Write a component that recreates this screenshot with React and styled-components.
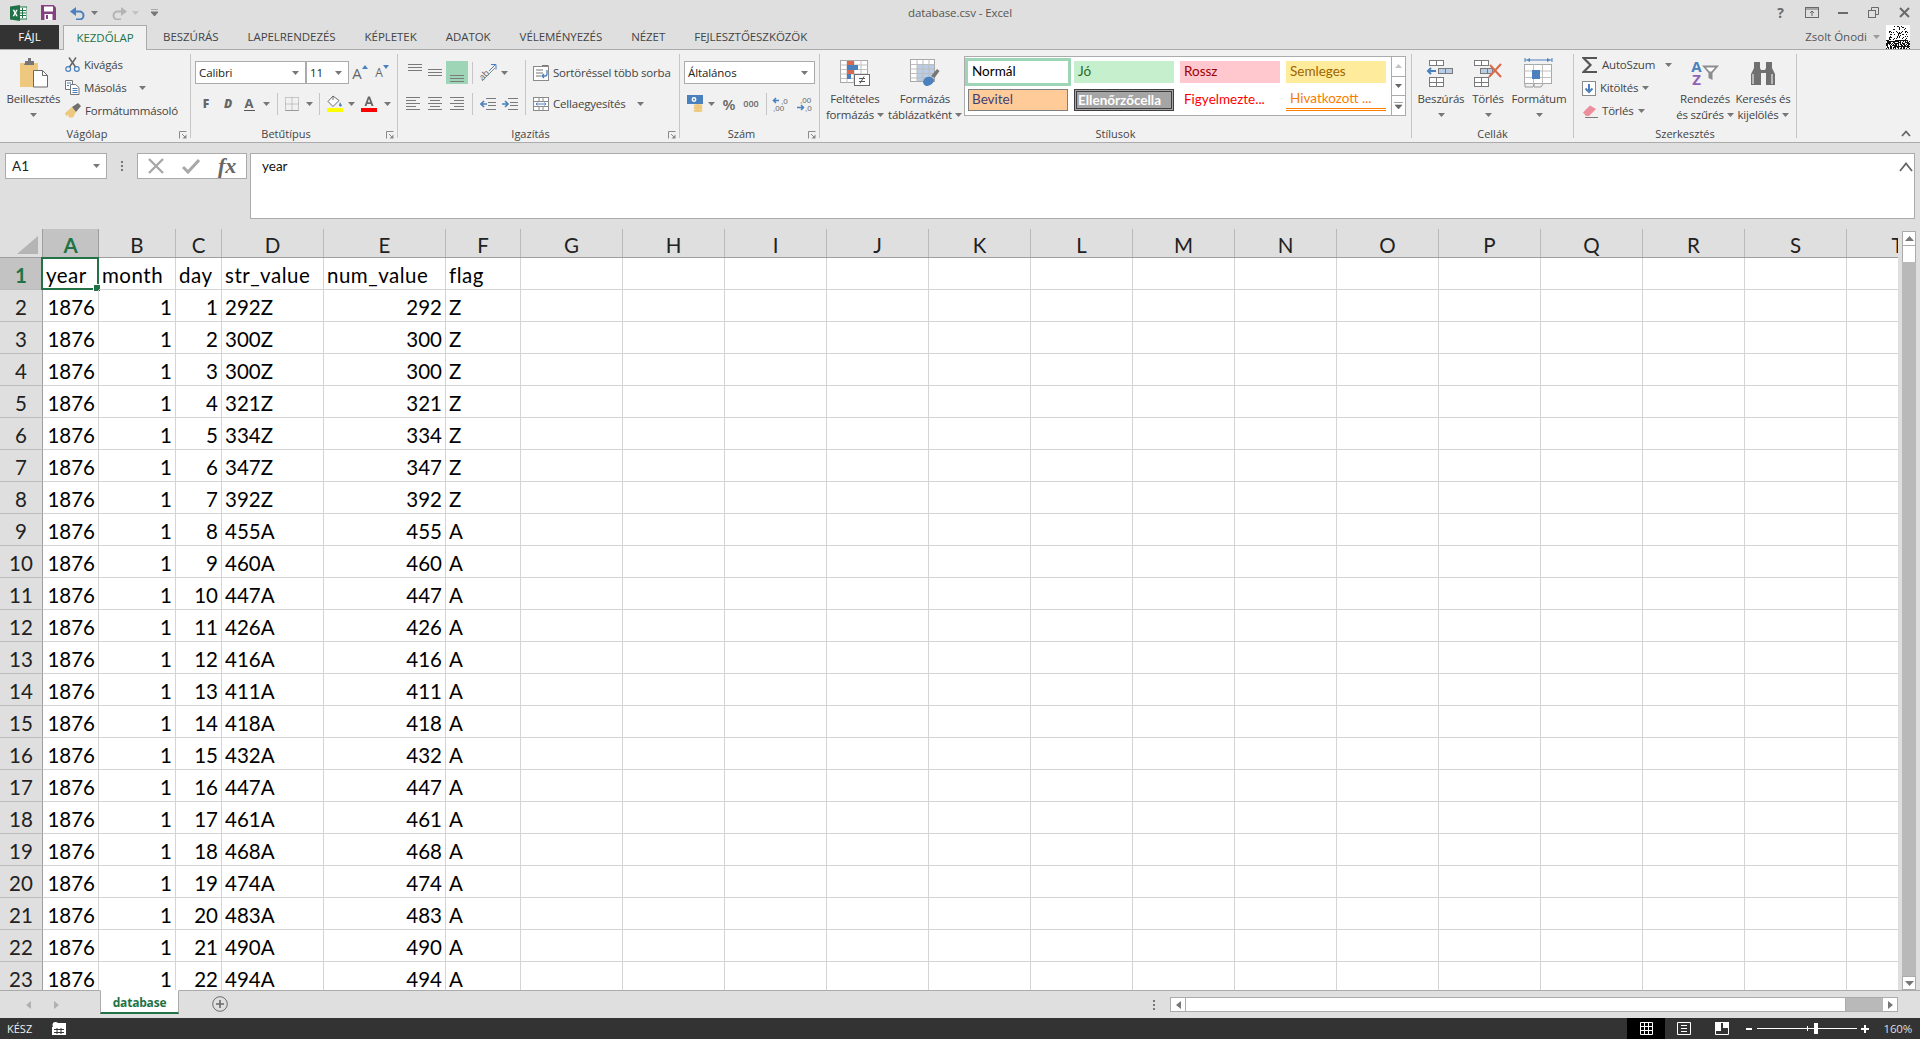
import React from 'react';
import styled, { createGlobalStyle } from 'styled-components';

const UI = '"Open Sans", "Noto Sans", sans-serif';
const CAL = 'Lato, "Liberation Sans", sans-serif';

const Global = createGlobalStyle`
  html, body { margin: 0; padding: 0; background: #dfdfdf; }
  * { box-sizing: border-box; }
`;

const Page = styled.div`
  width: 1920px; height: 1039px; display: flex; flex-direction: column; overflow: hidden;
  background: #dfdfdf; font-family: ${UI}; font-size: 11.5px; color: #444;
`;
const Glyph = styled.svg`display: block; flex: none;`;
const Ico = ({ w = 16, h = 16, children }) => <Glyph width={w} height={h} viewBox={`0 0 ${w} ${h}`}>{children}</Glyph>;

/* ---------- title bar ---------- */
const TitleBar = styled.div`
  height: 25px; display: grid; grid-template-columns: 1fr auto 1fr; align-items: center;
`;
const Qat = styled.div`display: flex; align-items: center; padding-left: 10px;`;
const QatItem = styled.div`
  width: ${p => p.$w}px; margin-left: ${p => p.$ml || 0}px; display: flex; align-items: center; justify-content: center;
`;
const WinTitle = styled.div`font-size: 11.5px; color: #555; letter-spacing: -0.1px; padding-bottom: 1px;`;
const WinButtons = styled.div`display: flex; justify-content: flex-end; align-items: center; padding-right: 0;`;
const WinBtn = styled.div`width: ${p => p.$w || 31}px; display: flex; justify-content: center; color: #6a6a6a; font-weight: 700; font-size: 14px;`;

/* ---------- tabs ---------- */
const TabRow = styled.div`
  height: 25px; display: flex; align-items: stretch; border-bottom: 1px solid #ababab;
`;
const FileTab = styled.div`
  width: 59px; margin-right: 4px; background: #333; color: #fff; display: flex; align-items: center; justify-content: center; font-size: 11.5px; padding-bottom: 1px;
`;
const Tab = styled.div`
  padding: 0 ${p => (p.$active ? 12.5 : 14.5)}px 2px; display: flex; align-items: center; font-size: 11.5px; color: ${p => (p.$active ? '#217346' : '#444')};
  letter-spacing: -0.05px;
  margin-right: ${p => (p.$active ? 1.5 : 0)}px;
  ${p => p.$active && `
    background:#f1f1f1; border:1px solid #ababab; border-bottom:0; height:25px;
  `}
`;
const UserBox = styled.div`margin-left: auto; display: flex; align-items: center; padding: 0 10px 1px 0; gap: 6px; font-size: 11.5px; color: #555;`;

/* ---------- ribbon ---------- */
const Ribbon = styled.div`
  height: 93px; padding: 4px 0; display: flex; background: #f1f1f1; border-bottom: 1px solid #ababab;
`;
const Group = styled.div`
  width: ${p => p.$w}px; height: 84px; flex: none; display: flex; flex-direction: column; position: relative;
  border-right: 1px solid #c6c6c6;
`;
const GroupBody = styled.div`height: 73px; display: flex; padding-left: ${p => p.$pl || 0}px;`;
const GroupLabel = styled.div`
  height: 14px; line-height: 14px; margin-bottom: -3px; text-align: center; font-size: 11px; color: #444;
  padding-right: ${p => (p.$launch ? 16 : 0)}px;
`;
const Launcher = styled.div`position: absolute; right: 3px; bottom: -1px;`;
const Big = styled.div`
  width: ${p => p.$w}px; margin-left: ${p => p.$ml || 0}px; flex: none; display: flex; flex-direction: column; align-items: center; padding-top: 4px;
`;
const BigIcon = styled.div`height: 30px; display: flex; align-items: center; justify-content: center;`;
const BigLine = styled.div`
  height: 16px; line-height: 16px; margin-top: ${p => p.$mt || 0}px; white-space: nowrap; font-size: 11.5px; letter-spacing: -0.2px; display: flex; align-items: center; gap: 3px;
`;
const SmallCol = styled.div`width: ${p => p.$w}px; margin-left: ${p => p.$ml || 0}px; margin-top: ${p => p.$mt || 0}px; flex: none;`;
const SmallRow = styled.div`height: 23px; display: flex; align-items: center; gap: 4px; white-space: nowrap; font-size: 11.5px; letter-spacing: -0.2px;`;
const Caret = ({ c = '#777' }) => <Ico w={7} h={4}><path d="M0 0h7L3.5 4z" fill={c} /></Ico>;
const CaretSlot = styled.div`width: ${p => p.$w}px; margin-left: ${p => p.$ml || 0}px; flex: none; display: flex; justify-content: center;`;
const Stack = styled.div`display: flex; flex-direction: column; flex: none; padding-top: 7px; gap: 8px; width: ${p => (p.$w ? `${p.$w}px` : 'auto')};`;
const ToolRow = styled.div`height: ${p => p.$h || 23}px; display: flex; align-items: center; padding-left: ${p => p.$pl || 0}px;`;
const Tool = styled.div`
  width: ${p => p.$w}px; height: 23px; margin-left: ${p => p.$ml || 0}px; flex: none; display: flex; align-items: center; justify-content: center;
  background: ${p => (p.$on ? '#9fd5b7' : 'transparent')}; color: #555;
`;
const Sep = styled.div`width: 1px; height: 22px; margin-left: ${p => p.$ml || 0}px; background: #c6c6c6; flex: none;`;
const TallSep = styled.div`width: 1px; height: 55px; margin-top: 6px; background: #c6c6c6; flex: none;`;
const Select = styled.div`
  width: ${p => p.$w}px; height: 23px; flex: none; margin-left: ${p => p.$ml || 0}px; background: #fff; border: 1px solid #ababab; display: flex; align-items: center; justify-content: space-between;
  padding: 0 6px 0 3px; font-size: 11.5px; color: #222; letter-spacing: -0.1px;
`;
const BoldLetter = styled.span`font-size: 12px; font-weight: 800; font-style: ${p => (p.$it ? 'italic' : 'normal')}; color: #666;`;
const LetterWrap = styled.span`position: relative; display: flex; flex-direction: column; align-items: center; line-height: 13px; font-weight: 700; font-size: 13px; color: #666;`;
const GrowLetter = styled.span`font-size: ${p => (p.$small ? 12 : 15)}px; font-weight: 500; line-height: 16px; color: #666;`;
const Bar = styled.span`width: ${p => p.$w || 11}px; height: ${p => p.$h || 1}px; background: ${p => p.$c || '#555'}; display: block;`;
const Sym = styled.span`font-size: ${p => p.$s || 12}px; font-weight: 600; color: #666;`;

/* gallery */
const Gallery = styled.div`
  width: 442px; height: 60px; margin: 2px 0 0 4px; background: #fff; border: 1px solid #ababab; display: flex; flex: none;
`;
const Styles = styled.div`
  width: 426px; padding: 4px 0 0 3px; display: grid; grid-template-columns: repeat(4, 100px); grid-auto-rows: 22px; column-gap: 6px; row-gap: 6px;
`;
const StyleCell = styled.div`
  height: 22px; display: flex; align-items: center; padding: 0 0 2px 4px; white-space: nowrap; font-family: ${CAL}; font-size: 13.5px;
  background: ${p => p.$bg || 'transparent'}; color: ${p => p.$c || '#000'}; font-weight: ${p => (p.$b ? 700 : 400)};
  ${p => p.$sel && 'box-shadow: 0 0 0 3px #9fd5b7;'}
  ${p => p.$bd && `border: 1px solid ${p.$bd}; padding-left: 3px;`}
  ${p => p.$dbl && 'border: 3px double #3f3f3f; padding: 0 0 0 1px;'}
  ${p => p.$under && 'border-bottom: 3px double #ff8001;'}
`;
const GalleryScroll = styled.div`
  flex: 1; border-left: 1px solid #ababab; display: flex; flex-direction: column;
`;
const GalleryBtn = styled.div`
  flex: 1; display: flex; align-items: center; justify-content: center; & + & { border-top: 1px solid #ababab; }
`;
const Collapse = styled.div`margin-left: auto; align-self: flex-end; margin-right: 9px; margin-bottom: 1px;`;

/* ---------- formula bar ---------- */
const FormulaBar = styled.div`height: 86px; padding: 10px 5px 0; display: flex; align-items: flex-start; flex: none;`;
const NameBox = styled.div`
  width: 102px; height: 26px; background: #fff; border: 1px solid #ababab; display: flex; align-items: center; justify-content: space-between; padding: 0 6px; font-family: ${CAL}; font-size: 13.5px; color: #222;
`;
const Dots = styled.div`width: 30px; height: 26px; display: flex; align-items: center; justify-content: center;`;
const FxBox = styled.div`
  width: 110px; height: 26px; background: #fff; border: 1px solid #ababab; display: flex; align-items: center; gap: 18px; padding: 0 4px 0 10px;
`;
const Fx = styled.span`font-family: "Liberation Serif", serif; font-style: italic; font-weight: 700; font-size: 22px; line-height: 24px; color: #666;`;
const FormulaInput = styled.div`
  position: relative; flex: 1; margin-left: 3px; height: 66px; background: #fff; border: 1px solid #ababab; padding: 3px 11px; font-family: ${CAL}; font-size: 13.5px; line-height: 18px; color: #111;
`;
const ExpandIcon = styled.div`position: absolute; right: 1px; top: 8px;`;

/* ---------- sheet ---------- */
const SheetArea = styled.div`height: 761px; display: flex; flex: none;`;
const Sheet = styled.div`width: 1898px; height: 761px; overflow: hidden; background: #fff; flex: none;`;
const TEMPLATE = `43px 56px 77px 46px 102px 122px 75px repeat(14, 102px)`;
const HeadRow = styled.div`
  display: grid; grid-template-columns: ${TEMPLATE}; height: 29px; background: #dfdfdf; border-bottom: 1px solid #9e9e9e; width: 2100px;
`;
const Corner = styled.div`border-right: 1px solid #9e9e9e; display: flex; align-items: flex-end; justify-content: flex-end; padding: 0 4px 3px 0;`;
const ColHead = styled.div`
  border-right: 1px solid #b9b9b9; display: flex; align-items: center; justify-content: center; padding-top: 3px; font-family: ${CAL}; font-size: 20.5px; color: #222;
  ${p => p.$on && 'background:#c3c3c3; color:#217346; font-weight:700; border-right-color:#9e9e9e;'}
`;
const Row = styled.div`display: grid; grid-template-columns: ${TEMPLATE}; height: 32px; width: 2100px;`;
const RowHead = styled.div`
  background: ${p => (p.$on ? '#c3c3c3' : '#dfdfdf')}; border-right: 1px solid #9e9e9e; border-bottom: 1px solid #bdbdbd; display: flex; align-items: center; justify-content: center; padding-top: 2px;
  font-family: ${CAL}; font-size: 20.5px; color: ${p => (p.$on ? '#217346' : '#222')}; font-weight: ${p => (p.$on ? 700 : 400)};
`;
const Cell = styled.div`
  position: relative; border-right: 1px solid #d4d4d4; border-bottom: 1px solid #d4d4d4; display: flex; align-items: center; white-space: nowrap;
  justify-content: ${p => (p.$num ? 'flex-end' : 'flex-start')}; padding: ${p => (p.$num ? '2px 3px 0 0' : '2px 0 0 3px')};
  font-family: ${CAL}; font-size: 20.5px; color: #000; letter-spacing: ${p => (p.$head ? 0.5 : 0)}px;
`;
const Selection = styled.div`position: absolute; left: -2px; top: -1px; right: -1px; bottom: -1px; border: 2px solid #217346; pointer-events: none;`;
const Handle = styled.div`position: absolute; right: -3px; bottom: -3px; width: 6px; height: 6px; background: #217346; border: 1px solid #fff; box-sizing: content-box; margin: -1px;`;
const VScroll = styled.div`
  width: 22px; padding: 2px 4px 0; display: flex; flex-direction: column;
`;
const ScrollBtn = styled.div`
  height: ${p => p.$h || 15}px; background: #fff; border: 1px solid #ababab; display: flex; align-items: center; justify-content: center; flex: none;
`;
const VThumb = styled.div`height: 16px; background: #fff; border-left: 1px solid #ababab; border-right: 1px solid #ababab; flex: none;`;
const VTrack = styled.div`flex: 1; background: #b9b9b9;`;

/* ---------- sheet bar ---------- */
const SheetBar = styled.div`height: 28px; flex: none; display: flex; align-items: flex-start; border-top: 1px solid #ababab;`;
const NavArrows = styled.div`width: 100px; height: 27px; display: flex; align-items: center; padding-left: 26px; gap: 23px;`;
const SheetTab = styled.div`
  width: 79px; height: 24px; margin-top: -1px; padding-top: 2px; background: #fff; border: 1px solid #ababab; border-top-color: #fff; border-bottom: 2px solid #217346; display: flex; align-items: center; justify-content: center;
  color: #217346; font-weight: 700; font-size: 12px; letter-spacing: -0.2px;
`;
const AddSheet = styled.div`margin-left: 33px; height: 25px; display: flex; align-items: center;`;
const SheetDots = styled.div`margin-left: auto; width: 17px; height: 27px; display: flex; align-items: center; justify-content: center;`;
const HScroll = styled.div`width: 728px; height: 15px; margin: 6px 22px 0 8px; display: flex; border: 1px solid #ababab; background: #b9b9b9;`;
const HEnd = styled.div`width: 14px; background: #fff; display: flex; align-items: center; justify-content: center; flex: none;`;
const HThumb = styled.div`width: 661px; background: #fff; border-left: 1px solid #ababab; flex: none; border-right: 1px solid #ababab;`;
const HFill = styled.div`flex: 1;`;

/* ---------- status ---------- */
const StatusBar = styled.div`height: 21px; flex: none; background: #333; color: #eee; display: flex; align-items: center; font-size: 11px; padding-left: 7px;`;
const StatusIcon = styled.div`margin-left: 20px;`;
const ViewBtns = styled.div`margin-left: auto; display: flex; height: 100%; align-items: stretch;`;
const ViewBtn = styled.div`width: 38px; display: flex; align-items: center; justify-content: center; background: ${p => (p.$on ? '#000' : 'transparent')};`;
const Zoomer = styled.div`display: flex; align-items: center; margin-left: 5px;`;
const Slider = styled.div`width: 100px; height: 1px; margin: 0 4px 0 5px; background: #fff; position: relative;`;
const SliderTick = styled.div`position: absolute; left: 50px; top: -2px; width: 1px; height: 5px; background: #fff;`;
const SliderThumb = styled.div`position: absolute; left: 57px; top: -5px; width: 4px; height: 11px; background: #fff;`;
const ZoomPct = styled.div`width: 42px; text-align: right; padding-right: 8px; margin-left: 9px; color: #ddd; font-size: 11.5px; letter-spacing: -0.2px;`;

/* ---------- icons ---------- */
const BL = '#4a80bd';
const ExcelLogo = () => <Ico w={17} h={16}><rect x="7" y="2" width="10" height="12" fill="#fff" stroke="#1f7246" /><path d="M10 5.5h6M10 8h6M10 10.5h6M12.5 3v10" stroke="#1f7246" /><path d="M0 1.5 10 0v16L0 14.5z" fill="#1f7246" /><path d="M2.7 4.8h1.8L5.2 7 6 4.8h1.7L6.1 8l1.7 3.3H6L5.2 9l-.9 2.3H2.6L4.3 8z" fill="#fff" /></Ico>;
const SaveIcon = () => <Ico w={15} h={15}><path d="M0 0h12.5L15 2.5V15H0z" fill="#84407f" /><rect x="3" y="1.5" width="9" height="5" fill="#fff" /><rect x="3.5" y="9" width="8" height="6" fill="#fff" /><rect x="5" y="10" width="2" height="4" fill="#84407f" /></Ico>;
const Undo = ({ c = '#4a80bd', flip }) => <Ico w={16} h={14}><g transform={flip ? 'translate(16 0) scale(-1 1)' : undefined}><path d="M3 5.5h6.5a4 4 0 0 1 0 8H6" fill="none" stroke={c} strokeWidth="2" /><path d="M6 1v9L0 5.5z" fill={c} /></g></Ico>;
const QatMore = () => <Ico w={7} h={7}><path d="M0 0h7M0 3h7L3.5 7 0 3z" stroke="#777" fill="#777" /></Ico>;
const PasteIcon = () => <Ico w={30} h={30}><rect x="1" y="5" width="18" height="24" fill="#edc87e" /><path d="M6 5V3h3V0h3v3h3v4H5z" fill="#767676" /><path d="M14.5 12.5h9l5 5v11.5h-14z" fill="#fff" stroke="#6a6a6a" /><path d="M23.5 12.5v5h5" fill="none" stroke="#6a6a6a" /></Ico>;
const Scissors = () => <Ico w={15} h={15}><circle cx="3.2" cy="12" r="2.4" fill="none" stroke={BL} strokeWidth="1.2" /><circle cx="11.8" cy="12" r="2.4" fill="none" stroke={BL} strokeWidth="1.2" /><path d="M4.5 10 11 0.5M10.5 10 4 0.5" stroke="#666" strokeWidth="1.5" /></Ico>;
const CopyIcon = () => <Ico w={15} h={15}><path d="M.5.5h7v9h-7z" fill="#fff" stroke="#777" /><path d="M5.5 4.5h5l3.5 3V14.5H5.5z" fill="#fff" stroke="#777" /><path d="M2 3h4M2 5.5h2M7.5 8.5h5M7.5 10.5h5M7.5 12.5h5" stroke={BL} /></Ico>;
const BrushIcon = () => <Ico w={16} h={15}><path d="M0 10 7 4l4 5-3 5.5H4l-1-3-1.5 2z" fill="#edc87e" /><path d="m7 4 6-4 3 3-5 6z" fill="#6f6f6f" /></Ico>;
const Launch = () => <Ico w={8} h={8}><path d="M.5 7.5v-7h7" fill="none" stroke="#8a8a8a" /><path d="M3 3l3.5 3.5" stroke="#8a8a8a" /><path d="M7.5 3.5v4h-4z" fill="#8a8a8a" /></Ico>;
const Tri = ({ up }) => <Ico w={6} h={4}><path d={up ? 'M0 4h6L3 0z' : 'M0 0h6L3 4z'} fill={BL} /></Ico>;
const GrowWrap = styled.span`display: flex; align-items: flex-start; gap: 0;`;
const BordersIcon = () => <Ico w={14} h={14}><path d="M.5.5h13v13H.5z M7 .5v13 M.5 7h13" fill="none" stroke="#9a9a9a" strokeDasharray="1 1" /><path d="M.5 13.5h13" stroke="#9a9a9a" /></Ico>;
const Fill = () => <Ico w={16} h={17}><path d="M6 1 1 6.5l5 5 6-6z" fill="#fff" stroke="#6a6a6a" /><path d="M6 1V5" stroke="#6a6a6a" /><path d="m13 7 2 3.5a1.6 1.6 0 0 1-3 0z" fill={BL} /><rect y="13" width="16" height="4" fill="#ffff00" /></Ico>;
const FontColor = () => <Ico w={16} h={17}><path d="M3.5 11 7 1.5h2L12.5 11h-2L9.8 9H6.2l-.7 2zM6.8 7.3h2.4L8 3.8z" fill="#666" /><rect y="13" width="16" height="4" fill="#ff0000" /></Ico>;
const Lines = ({ rows, w = 22, h = 23 }) => <Ico w={w} h={h}>{rows.map(([x, y, l], i) => <rect key={i} x={x} y={y} width={l} height="1" fill="#7a7a7a" />)}</Ico>;
const Orient = () => <Ico w={18} h={18}><text transform="rotate(-45 7 12)" x="1" y="13" fontSize="9" fill="#666" fontFamily="Open Sans">ab</text><path d="M3 17 16 4" stroke="#888" /><path d="M12 .5h5v5" fill="none" stroke={BL} /><path d="M10 7l6-6" stroke={BL} /></Ico>;
const Indent = ({ right }) => <Ico w={16} h={12}><path d="M6 .5h10M8 4.5h8M8 7.5h8M6 11.5h10" stroke="#7a7a7a" /><path d={right ? 'M0 6h5M3 3l3 3-3 3' : 'M7 6H1M4 3 1 6l3 3'} fill="none" stroke={BL} strokeWidth="1.6" /></Ico>;
const WrapIcon = () => <Ico w={16} h={16}><rect x=".5" y="1.5" width="15" height="14" fill="#fff" stroke="#8a8a8a" /><path d="M3 5h7M3 8h7M3 11h5" stroke="#777" /><path d="M9 .5h6.5" stroke="#777" /><path d="M14 5v4a2 2 0 0 1-2 2h-3M11 9 9 11l2 2" fill="none" stroke={BL} strokeWidth="1.3" /></Ico>;
const MergeIcon = () => <Ico w={16} h={16}><rect x=".5" y="1.5" width="15" height="13" fill="#fff" stroke="#8a8a8a" /><path d="M.5 5.5h15M.5 10.5h15M6 1.5v4M10 1.5v4M6 10.5v4M10 10.5v4" stroke="#8a8a8a" /><path d="M3 8h10M4.5 6.5 3 8l1.5 1.5M11.5 6.5 13 8l-1.5 1.5" fill="none" stroke={BL} /></Ico>;
const Money = () => <Ico w={17} h={17}><rect x="0" y="0" width="16" height="9" fill={BL} /><circle cx="7" cy="4.5" r="2.4" fill="#fff" /><circle cx="7" cy="4.5" r="1" fill={BL} /><ellipse cx="11" cy="10.5" rx="4.5" ry="1.5" fill="#edc87e" /><ellipse cx="11" cy="13" rx="4.5" ry="1.5" fill="#edc87e" /><ellipse cx="11" cy="15.5" rx="4.5" ry="1.5" fill="#edc87e" /></Ico>;
const Decimals = ({ inc }) => <Ico w={16} h={16}>{inc
  ? <><path d="M7 4.5H1.5M4 2 1.5 4.5 4 7" fill="none" stroke={BL} strokeWidth="1.5" /><text x="9" y="8" fontSize="8" fill="#666" fontFamily="Liberation Sans">,0</text><text x="1" y="15" fontSize="8" fill="#666" fontFamily="Liberation Sans">,00</text></>
  : <><text x="4" y="7" fontSize="8" fill="#666" fontFamily="Liberation Sans">,00</text><path d="M1 11.5h6M5 9l2.5 2.5L5 14" fill="none" stroke={BL} strokeWidth="1.5" /><text x="9" y="15" fontSize="8" fill="#666" fontFamily="Liberation Sans">,0</text></>}</Ico>;
const CondIcon = () => <Ico w={30} h={26}><rect x=".5" y=".5" width="27" height="22" fill="#fff" stroke="#a8a8a8" /><path d="M.5 5h27M.5 9.5h27M.5 14h27M.5 18.5h27M7 .5v22M14 .5v22M21 .5v22" stroke="#c0c0c0" /><rect x="7" y="1" width="7" height="4" fill="#d8694a" /><rect x="7" y="5" width="11" height="5" fill="#4a80bd" /><rect x="7" y="10" width="7" height="4" fill="#d8694a" /><rect x="7" y="14" width="4" height="5" fill="#4a80bd" /><rect x="14.5" y="14.5" width="15" height="11" fill="#fff" stroke="#6a6a6a" /><path d="M19 18.5h6M19 21.5h6M24 16.5l-4 7" stroke="#555" /></Ico>;
const TableIcon = () => <Ico w={30} h={28}><rect x=".5" y=".5" width="24" height="22" fill="#fff" stroke="#a8a8a8" /><rect x="7" y="6" width="17" height="16" fill="#b9cee6" /><path d="M.5 5.5h24M.5 10h24M.5 14.5h24M.5 19h24M7 .5v22M13 .5v22M19 .5v22" stroke="#bdbdbd" /><path d="m21 17 6-7 2.5 2-5 7z" fill="#777" /><path d="M16 27a6 5 0 0 1 5-9l3 2.5c0 4-4 6.5-8 6.5z" fill="#4a80bd" /></Ico>;
const CellRect = ({ x, y, w = 8, h = 5, f = '#fff' }) => <rect x={x + 0.5} y={y + 0.5} width={w} height={h} fill={f} stroke="#7a7a7a" />;
const InsertIcon = () => <Ico w={30} h={28}><CellRect x={3} y={1} w={7} /><CellRect x={10} y={1} w={7} /><CellRect x={12} y={9} w={7} f="#b9cee6" /><CellRect x={19} y={9} w={7} f="#b9cee6" /><path d="M10 12H2M5 9l-3 3 3 3" fill="none" stroke={BL} strokeWidth="2" /><CellRect x={3} y={18} w={7} /><CellRect x={10} y={18} w={7} /><CellRect x={3} y={23} w={7} h={4} /><CellRect x={10} y={23} w={7} h={4} /></Ico>;
const DeleteIcon = () => <Ico w={30} h={28}><CellRect x={1} y={1} w={7} /><CellRect x={8} y={1} w={7} /><CellRect x={7} y={9} w={7} f="#b9cee6" /><CellRect x={14} y={9} w={5} f="#b9cee6" /><CellRect x={1} y={18} w={7} /><CellRect x={8} y={18} w={7} /><CellRect x={1} y={23} w={7} h={4} /><CellRect x={8} y={23} w={7} h={4} /><path d="m17 6 11 12M28 5 16 18" stroke="#d8694a" strokeWidth="2" /></Ico>;
const FormatIcon = () => <Ico w={30} h={30}><path d="M1 2h27M1 0v4M28 0v4M3.5 2l2-1.5v3zM25.5 2l-2-1.5v3z" stroke={BL} fill="none" /><rect x=".5" y="6.5" width="27" height="19" fill="#fff" stroke="#a8a8a8" /><path d="M.5 13h27M.5 19.5h27M9.5 6.5v19M18.5 6.5v19" stroke="#c0c0c0" /><rect x="8" y="12" width="8" height="9" fill="#4a80bd" /><path d="M1 26v3h8l1-3M10 26v3h7l2-3" fill="none" stroke="#9a9a9a" /></Ico>;
const Sigma = () => <Ico w={16} h={16}><path d="M15 1H1.5L8.5 8l-7 7H15" fill="none" stroke="#555" strokeWidth="2.2" /></Ico>;
const FillDown = () => <Ico w={14} h={16}><rect x=".5" y="1.5" width="13" height="14" fill="#fff" stroke="#8a8a8a" /><path d="M7 4v8M3.5 8.5 7 12l3.5-3.5" fill="none" stroke={BL} strokeWidth="2" /></Ico>;
const Eraser = () => <Ico w={16} h={14}><path d="M1 8.5 8 1.5l6 3.5-7 7H4z" fill="#ee8d9c" /><path d="M3 13.5h13" stroke="#7a7a7a" /></Ico>;
const SortText = styled.span`font-family: ${UI}; font-size: 15px; font-weight: 700; line-height: 13px; color: ${p => p.$c};`;
const SortCol = styled.span`display: flex; flex-direction: column; align-items: center;`;
const Funnel = () => <Ico w={17} h={16}><path d="M0 .5h17L10.5 8v7l-4-2V8z" fill="#8c8c8c" /><path d="M4 2.5h9L9.5 6.5h-2z" fill="#fff" /></Ico>;
const Binoc = () => <Ico w={26} h={26}><path d="M4 2h6v6l1 2h4l1-2V2h6v6l3 6v11h-9V13h-5v12H1V14l3-6z" fill="#707070" /><path d="M3 14v10M22 14v10" stroke="#fff" /></Ico>;
const Chevron = ({ s = 10, c = '#666' }) => <Ico w={s} h={Math.ceil(s * 0.7)}><path d={`M1 ${Math.ceil(s * 0.7) - 1}L${s / 2} 1.5 ${s - 1} ${Math.ceil(s * 0.7) - 1}`} fill="none" stroke={c} strokeWidth="1.8" /></Ico>;
const Avatar = () => {
  const dots = [];
  for (let y = 0; y < 24; y += 1) for (let x = 0; x < 24; x += 1) {
    const v = (x * 7 + y * 13 + (x * y) % 11 + (x ^ y)) % 5;
    const r = Math.hypot(x - 12, y - 10);
    if ((r < 9 && v === 0) || (y > 14 && v < 3) || (r > 8 && r < 10 && v < 2)) dots.push(<rect key={`${x}-${y}`} x={x} y={y} width="1" height="1" fill="#111" />);
  }
  return <Ico w={24} h={24}><rect width="24" height="24" fill="#fff" />{dots}</Ico>;
};

const TOP = [[6, 3, 14], [6, 6, 14], [6, 9, 14]];
const MID = [[4, 8, 14], [4, 11, 14], [4, 14, 14]];
const BOT = [[4, 14, 14], [4, 17, 14], [4, 20, 14]];
const LEFT = [[4, 5, 14], [4, 8, 10], [4, 11, 14], [4, 14, 10], [4, 17, 14]];
const CENTER = [[4, 5, 14], [6, 8, 10], [4, 11, 14], [6, 14, 10], [4, 17, 14]];
const RIGHT = [[4, 5, 14], [8, 8, 10], [4, 11, 14], [8, 14, 10], [4, 17, 14]];

const COLS = 'ABCDEFGHIJKLMNOPQRST'.split('');
const V = [292, 300, 300, 321, 334, 347, 392, 455, 460, 447, 426, 416, 411, 418, 432, 447, 461, 468, 474, 483, 490, 494];
const HEADERS = ['year', 'month', 'day', 'str_value', 'num_value', 'flag'];
const EMPTY = Array.from({ length: 14 });

const Grid = () => (
  <Sheet>
    <HeadRow>
      <Corner><Ico w={21} h={18}><path d="M21 0v18H0z" fill="#b5b5b5" /></Ico></Corner>
      {COLS.map(c => <ColHead key={c} $on={c === 'A'}>{c}</ColHead>)}
    </HeadRow>
    <Row>
      <RowHead $on>1</RowHead>
      {HEADERS.map((h, i) => (
        <Cell key={h} $head>{h}{i === 0 && <Selection><Handle /></Selection>}</Cell>
      ))}
      {EMPTY.map((_, i) => <Cell key={i} />)}
    </Row>
    {V.map((v, i) => {
      const flag = i < 7 ? 'Z' : 'A';
      return (
        <Row key={i}>
          <RowHead>{i + 2}</RowHead>
          <Cell $num>1876</Cell>
          <Cell $num>1</Cell>
          <Cell $num>{i + 1}</Cell>
          <Cell>{`${v}${flag}`}</Cell>
          <Cell $num>{v}</Cell>
          <Cell>{flag}</Cell>
          {EMPTY.map((_, k) => <Cell key={k} />)}
        </Row>
      );
    })}
  </Sheet>
);

export default function App() {
  return (
    <Page>
      <Global />
      <TitleBar>
        <Qat>
          <ExcelLogo />
          <QatItem $w={15} $ml={14}><SaveIcon /></QatItem>
          <QatItem $w={16} $ml={14}><Undo /></QatItem>
          <QatItem $w={10} $ml={3}><Caret /></QatItem>
          <QatItem $w={16} $ml={12}><Undo c="#b4b4b4" flip /></QatItem>
          <QatItem $w={10} $ml={3}><Caret c="#c2c2c2" /></QatItem>
          <QatItem $w={7} $ml={11}><QatMore /></QatItem>
        </Qat>
        <WinTitle>database.csv - Excel</WinTitle>
        <WinButtons>
          <WinBtn>?</WinBtn>
          <WinBtn><Ico w={14} h={11}><rect x=".5" y=".5" width="13" height="10" fill="none" stroke="#6a6a6a" /><path d="M.5 2h13M7 9V4M5 6l2-2 2 2" fill="none" stroke="#6a6a6a" /></Ico></WinBtn>
          <WinBtn><Ico w={10} h={2}><rect width="10" height="2" fill="#6a6a6a" /></Ico></WinBtn>
          <WinBtn><Ico w={11} h={11}><rect x=".5" y="3.5" width="7" height="7" fill="none" stroke="#6a6a6a" /><path d="M3.5 3V.5h7v7H8" fill="none" stroke="#6a6a6a" /></Ico></WinBtn>
          <WinBtn><Ico w={11} h={11}><path d="m1 1 9 9M10 1l-9 9" stroke="#6a6a6a" strokeWidth="2" /></Ico></WinBtn>
        </WinButtons>
      </TitleBar>

      <TabRow>
        <FileTab>FÁJL</FileTab>
        <Tab $active>KEZDŐLAP</Tab>
        <Tab>BESZÚRÁS</Tab>
        <Tab>LAPELRENDEZÉS</Tab>
        <Tab>KÉPLETEK</Tab>
        <Tab>ADATOK</Tab>
        <Tab>VÉLEMÉNYEZÉS</Tab>
        <Tab>NÉZET</Tab>
        <Tab>FEJLESZTŐESZKÖZÖK</Tab>
        <UserBox>Zsolt Ónodi <Caret c="#9a9a9a" /> <Avatar /></UserBox>
      </TabRow>

      <Ribbon>
        <Group $w={191}>
          <GroupBody>
            <Big $w={59} $ml={4}>
              <BigIcon><PasteIcon /></BigIcon>
              <BigLine $mt={3}>Beillesztés</BigLine>
              <BigLine><Caret /></BigLine>
            </Big>
            <SmallCol $w={120} $ml={2} $mt={-1}>
              <SmallRow><Scissors />Kivágás</SmallRow>
              <SmallRow><CopyIcon />Másolás<CaretSlot $w={7} $ml={8}><Caret /></CaretSlot></SmallRow>
              <SmallRow><BrushIcon />Formátummásoló</SmallRow>
            </SmallCol>
          </GroupBody>
          <GroupLabel $launch>Vágólap</GroupLabel>
          <Launcher><Launch /></Launcher>
        </Group>

        <Group $w={207}>
          <GroupBody $pl={4}>
            <Stack>
              <ToolRow>
                <Select $w={111}>Calibri<Caret /></Select>
                <Select $w={43}>11<Caret /></Select>
                <Tool $w={22}><GrowWrap><GrowLetter>A</GrowLetter><Tri up /></GrowWrap></Tool>
                <Tool $w={22}><GrowWrap><GrowLetter $small>A</GrowLetter><Tri /></GrowWrap></Tool>
              </ToolRow>
              <ToolRow>
                <Tool $w={22}><BoldLetter>F</BoldLetter></Tool>
                <Tool $w={22}><BoldLetter $it>D</BoldLetter></Tool>
                <Tool $w={20}><LetterWrap>A<Bar /></LetterWrap></Tool>
                <CaretSlot $w={14}><Caret /></CaretSlot>
                <Sep $ml={4} />
                <Tool $w={28}><BordersIcon /></Tool>
                <CaretSlot $w={7}><Caret /></CaretSlot>
                <Sep $ml={6} />
                <Tool $w={24} $ml={3}><Fill /></Tool>
                <CaretSlot $w={8}><Caret /></CaretSlot>
                <Tool $w={28}><FontColor /></Tool>
                <CaretSlot $w={8}><Caret /></CaretSlot>
              </ToolRow>
            </Stack>
          </GroupBody>
          <GroupLabel $launch>Betűtípus</GroupLabel>
          <Launcher><Launch /></Launcher>
        </Group>

        <Group $w={282}>
          <GroupBody $pl={4}>
            <Stack $w={123}>
              <ToolRow>
                <Tool $w={22}><Lines rows={TOP} /></Tool>
                <Tool $w={22}><Lines rows={MID} /></Tool>
                <Tool $w={22} $on><Lines rows={BOT} /></Tool>
                <Sep $ml={4} />
                <Tool $w={26} $ml={2}><Orient /></Tool>
                <CaretSlot $w={7}><Caret /></CaretSlot>
              </ToolRow>
              <ToolRow>
                <Tool $w={22}><Lines rows={LEFT} /></Tool>
                <Tool $w={22}><Lines rows={CENTER} /></Tool>
                <Tool $w={22}><Lines rows={RIGHT} /></Tool>
                <Sep $ml={4} />
                <Tool $w={22} $ml={4}><Indent /></Tool>
                <Tool $w={22}><Indent right /></Tool>
              </ToolRow>
            </Stack>
            <TallSep />
            <SmallCol $w={140} $ml={7}>
              <Stack>
                <SmallRow><WrapIcon />Sortöréssel több sorba</SmallRow>
                <SmallRow><MergeIcon />Cellaegyesítés<CaretSlot $w={7} $ml={8}><Caret /></CaretSlot></SmallRow>
              </Stack>
            </SmallCol>
          </GroupBody>
          <GroupLabel $launch>Igazítás</GroupLabel>
          <Launcher><Launch /></Launcher>
        </Group>

        <Group $w={140}>
          <GroupBody $pl={4}>
            <Stack>
              <ToolRow>
                <Select $w={131}>Általános<Caret /></Select>
              </ToolRow>
              <ToolRow>
                <Tool $w={22}><Money /></Tool>
                <CaretSlot $w={10}><Caret /></CaretSlot>
                <Tool $w={26}><Sym $s={15}>%</Sym></Tool>
                <Tool $w={18}><Sym $s={9}>000</Sym></Tool>
                <Sep $ml={6} />
                <Tool $w={26}><Decimals inc /></Tool>
                <Tool $w={22}><Decimals /></Tool>
              </ToolRow>
            </Stack>
          </GroupBody>
          <GroupLabel $launch>Szám</GroupLabel>
          <Launcher><Launch /></Launcher>
        </Group>

        <Group $w={592}>
          <GroupBody>
            <Big $w={70}>
              <BigIcon><CondIcon /></BigIcon>
              <BigLine $mt={3}>Feltételes</BigLine>
              <BigLine>formázás<Caret /></BigLine>
            </Big>
            <Big $w={70}>
              <BigIcon><TableIcon /></BigIcon>
              <BigLine $mt={3}>Formázás</BigLine>
              <BigLine>táblázatként<Caret /></BigLine>
            </Big>
            <Gallery>
              <Styles>
                <StyleCell $sel $bg="#fff">Normál</StyleCell>
                <StyleCell $bg="#c6efce" $c="#276a1d">Jó</StyleCell>
                <StyleCell $bg="#ffc7ce" $c="#9c0006">Rossz</StyleCell>
                <StyleCell $bg="#ffeb9c" $c="#9c6500">Semleges</StyleCell>
                <StyleCell $bg="#ffcc99" $c="#3f3f76" $bd="#7f7f7f">Bevitel</StyleCell>
                <StyleCell $bg="#a5a5a5" $c="#fff" $b $dbl>Ellenőrzőcella</StyleCell>
                <StyleCell $c="#ff0000">Figyelmezte...</StyleCell>
                <StyleCell $c="#fa7d00" $under>Hivatkozott ...</StyleCell>
              </Styles>
              <GalleryScroll>
                <GalleryBtn><Ico w={7} h={4}><path d="M0 4h7L3.5 0z" fill="#c4c4c4" /></Ico></GalleryBtn>
                <GalleryBtn><Caret c="#666" /></GalleryBtn>
                <GalleryBtn><Ico w={9} h={7}><path d="M0 .5h9M1 3h7L4.5 7z" stroke="#666" strokeWidth=".6" fill="#666" /></Ico></GalleryBtn>
              </GalleryScroll>
            </Gallery>
          </GroupBody>
          <GroupLabel>Stílusok</GroupLabel>
        </Group>

        <Group $w={162}>
          <GroupBody>
            <Big $w={58}>
              <BigIcon><InsertIcon /></BigIcon>
              <BigLine $mt={3}>Beszúrás</BigLine>
              <BigLine><Caret /></BigLine>
            </Big>
            <Big $w={36}>
              <BigIcon><DeleteIcon /></BigIcon>
              <BigLine $mt={3}>Törlés</BigLine>
              <BigLine><Caret /></BigLine>
            </Big>
            <Big $w={66}>
              <BigIcon><FormatIcon /></BigIcon>
              <BigLine $mt={3}>Formátum</BigLine>
              <BigLine><Caret /></BigLine>
            </Big>
          </GroupBody>
          <GroupLabel>Cellák</GroupLabel>
        </Group>

        <Group $w={223}>
          <GroupBody>
            <SmallCol $w={94} $ml={8} $mt={-1}>
              <SmallRow><Sigma />AutoSzum<CaretSlot $w={7} $ml={6}><Caret /></CaretSlot></SmallRow>
              <SmallRow><FillDown />Kitöltés<Caret /></SmallRow>
              <SmallRow><Eraser />Törlés<Caret /></SmallRow>
            </SmallCol>
            <Big $w={58}>
              <BigIcon><SortCol><SortText $c="#4a80bd">A</SortText><SortText $c="#8f62b5">Z</SortText></SortCol><Funnel /></BigIcon>
              <BigLine $mt={3}>Rendezés</BigLine>
              <BigLine>és szűrés<Caret /></BigLine>
            </Big>
            <Big $w={58}>
              <BigIcon><Binoc /></BigIcon>
              <BigLine $mt={3}>Keresés és</BigLine>
              <BigLine>kijelölés<Caret /></BigLine>
            </Big>
          </GroupBody>
          <GroupLabel>Szerkesztés</GroupLabel>
        </Group>

        <Collapse><Chevron /></Collapse>
      </Ribbon>

      <FormulaBar>
        <NameBox>A1<Caret /></NameBox>
        <Dots><Ico w={2} h={10}><path d="M0 0h2v2H0zM0 4h2v2H0zM0 8h2v2H0z" fill="#777" /></Ico></Dots>
        <FxBox>
          <Ico w={16} h={16}><path d="m1 1 14 14M15 1 1 15" stroke="#a8a8a8" strokeWidth="2.4" /></Ico>
          <Ico w={18} h={16}><path d="m1 9 5 5L17 2" fill="none" stroke="#a8a8a8" strokeWidth="3" /></Ico>
          <Fx>fx</Fx>
        </FxBox>
        <FormulaInput>
          year
          <ExpandIcon><Chevron s={14} c="#666" /></ExpandIcon>
        </FormulaInput>
      </FormulaBar>

      <SheetArea>
        <Grid />
        <VScroll>
          <ScrollBtn><Ico w={9} h={5}><path d="M0 5h9L4.5 0z" fill="#777" /></Ico></ScrollBtn>
          <VThumb />
          <VTrack />
          <ScrollBtn $h={14}><Ico w={9} h={5}><path d="M0 0h9L4.5 5z" fill="#777" /></Ico></ScrollBtn>
        </VScroll>
      </SheetArea>

      <SheetBar>
        <NavArrows>
          <Ico w={5} h={8}><path d="M5 0v8L0 4z" fill="#b0b0b0" /></Ico>
          <Ico w={5} h={8}><path d="M0 0v8l5-4z" fill="#b0b0b0" /></Ico>
        </NavArrows>
        <SheetTab>database</SheetTab>
        <AddSheet><Ico w={16} h={16}><circle cx="8" cy="8" r="7.3" fill="none" stroke="#6a6a6a" /><path d="M4 8h8M8 4v8" stroke="#6a6a6a" strokeWidth="1.6" /></Ico></AddSheet>
        <SheetDots><Ico w={2} h={10}><path d="M0 0h2v2H0zM0 4h2v2H0zM0 8h2v2H0z" fill="#777" /></Ico></SheetDots>
        <HScroll>
          <HEnd><Ico w={5} h={8}><path d="M5 0v8L0 4z" fill="#777" /></Ico></HEnd>
          <HThumb />
          <HFill />
          <HEnd><Ico w={5} h={8}><path d="M0 0v8l5-4z" fill="#777" /></Ico></HEnd>
        </HScroll>
      </SheetBar>

      <StatusBar>
        KÉSZ
        <StatusIcon><Ico w={14} h={13}><circle cx="3.5" cy="3" r="3" fill="#fff" /><rect x="5" y="1" width="9" height="12" fill="#fff" /><rect y="5" width="14" height="8" fill="#fff" /><path d="M2 7.5h10M2 10.5h10M5 6v6M9 6v6" stroke="#333" /></Ico></StatusIcon>
        <ViewBtns>
          <ViewBtn $on><Ico w={13} h={13}><path d="M.5.5h12v12H.5zM4.5.5v12M8.5.5v12M.5 4.5h12M.5 8.5h12" fill="none" stroke="#fff" /></Ico></ViewBtn>
          <ViewBtn><Ico w={14} h={13}><path d="M.5.5h13v12H.5z" fill="none" stroke="#fff" /><path d="M4 3.5h6M4 6.5h6M4 9.5h6" stroke="#fff" /></Ico></ViewBtn>
          <ViewBtn><Ico w={14} h={13}><path d="M.5.5h13v12H.5z" fill="none" stroke="#fff" /><rect width="6" height="9" fill="#fff" /><rect x="8" width="6" height="6" fill="#fff" /></Ico></ViewBtn>
        </ViewBtns>
        <Zoomer>
          <Ico w={6} h={2}><rect width="6" height="2" fill="#fff" /></Ico>
          <Slider><SliderTick /><SliderThumb /></Slider>
          <Ico w={8} h={8}><path d="M0 3h8v2H0zM3 0h2v8H3z" fill="#fff" /></Ico>
          <ZoomPct>160%</ZoomPct>
        </Zoomer>
      </StatusBar>
    </Page>
  );
}
